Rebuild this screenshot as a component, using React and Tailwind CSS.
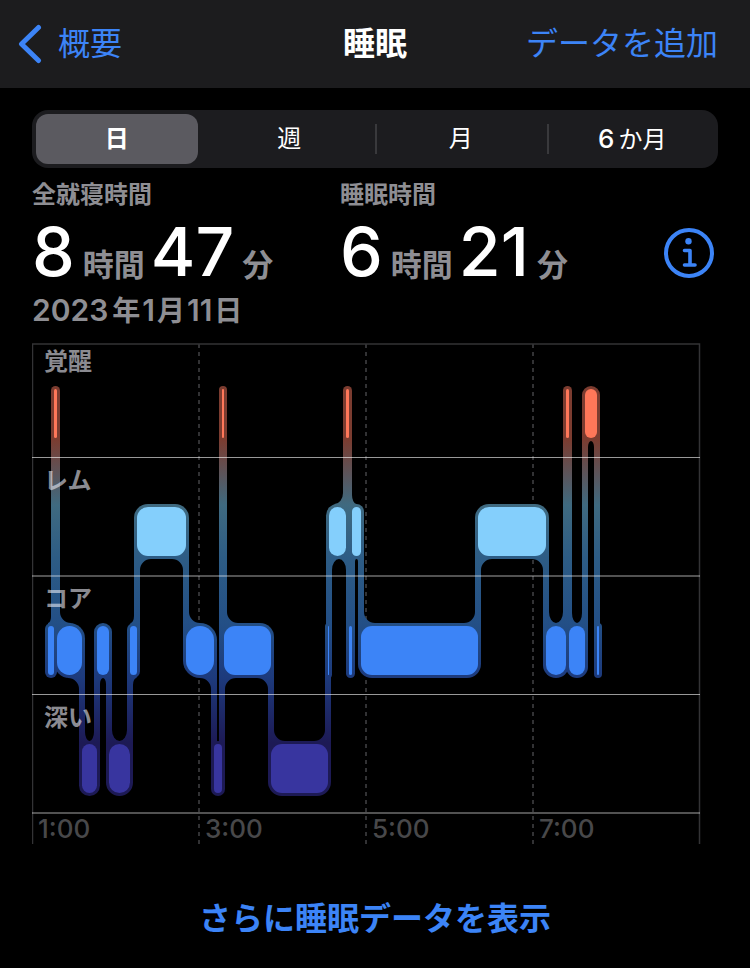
const stages = [
  { key: "awake", label: "覚醒", fill: "#ff7759" },
  { key: "rem", label: "レム", fill: "#84cffc" },
  { key: "core", label: "コア", fill: "#3c84f7" },
  { key: "deep", label: "深い", fill: "#38359f" },
];

// [stage index, x where the segment ends]
const night = [
  [2, 22], [0, 25], [2, 50], [3, 65], [2, 77], [3, 98], [2, 105], [1, 154],
  [2, 182], [3, 190], [0, 192], [2, 239], [3, 296], [2, 297], [1, 314],
  [0, 317], [2, 320], [1, 329], [2, 446], [1, 514], [2, 534], [0, 537],
  [2, 553], [0, 565], [2, 567],
];

const START = 16;
const EDGE = 3;
const BAR = 49;
const TOPS = [46, 164, 283, 401];

const segments = night.map(([stage, end], i) => ({
  stage,
  x: i === 0 ? START : night[i - 1][1],
  w: end - (i === 0 ? START : night[i - 1][1]),
  y: TOPS[stage],
}));

const radius = (w) => (w < 30 ? w / 2 : 11);

// curved corner where a connector leaves the halo of a bar
function fillet(cx, edge, side, dir, r) {
  const ry = Math.min(11, r * 2);
  const sweep = side * dir > 0 ? 1 : 0;
  return `M${cx} ${edge - dir * 16}V${edge + dir * ry}A${r} ${ry} 0 0 ${sweep} ${cx + side * r} ${edge}V${edge - dir * 16}Z`;
}

function filletsFor(i) {
  const seg = segments[i];
  const dirOf = (n) => (segments[n] ? Math.sign(segments[n].stage - seg.stage) : 0);
  const left = {};
  const right = {};
  const prev = segments[i - 1];
  const next = segments[i + 1];

  if (prev) {
    left[dirOf(i - 1)] = seg.x + EDGE;
    // a very short neighbour lets its far connector pass right beside this bar
    if (prev.w <= 3 && dirOf(i - 2) === -dirOf(i - 1)) left[dirOf(i - 2)] = prev.x + EDGE;
  }
  if (next) {
    right[dirOf(i + 1)] = seg.x + seg.w - EDGE;
    if (next.w <= 3 && dirOf(i + 2) === -dirOf(i + 1)) right[dirOf(i + 2)] = next.x + next.w - EDGE;
  }

  const paths = [];
  for (const dir of [-1, 1]) {
    const l = left[dir];
    const r = right[dir];
    const room = l !== undefined && r !== undefined ? (r - l) / 2 : seg.w / 2;
    const size = Math.min(11, room);
    if (size <= 1) continue;
    const edge = dir > 0 ? seg.y + BAR + EDGE : seg.y - EDGE;
    if (l !== undefined) paths.push(fillet(l, edge, 1, dir, size));
    if (r !== undefined) paths.push(fillet(r, edge, -1, dir, size));
  }
  return paths;
}

function SleepChart() {
  return (
    <svg viewBox="0 0 669 502" className="block w-full" role="img" aria-label="睡眠">
      <defs>
        <linearGradient id="halo" gradientUnits="userSpaceOnUse" x1="0" y1="43" x2="0" y2="453">
          <stop offset="0" stopColor="#7b3c30" />
          <stop offset="0.13" stopColor="#7b3c30" />
          <stop offset="0.29" stopColor="#3f6a80" />
          <stop offset="0.42" stopColor="#2d5c85" />
          <stop offset="0.58" stopColor="#234f86" />
          <stop offset="0.71" stopColor="#1d3a7c" />
          <stop offset="0.87" stopColor="#1d1a55" />
          <stop offset="1" stopColor="#1d1a55" />
        </linearGradient>
      </defs>

      <g stroke="#323234" strokeWidth="2">
        {[167, 334, 501].map((x) => (
          <line key={x} x1={x} x2={x} y1="1" y2="501" strokeDasharray="4 4" />
        ))}
      </g>
      <path d="M0.5 501V1H667.5V501" fill="none" stroke="#333335" strokeWidth="1.5" />

      <g fill="url(#halo)">
        {segments.map((s, i) => (
          <g key={s.x}>
            <rect x={s.x - EDGE} y={s.y - EDGE} width={s.w + EDGE * 2} height={BAR + EDGE * 2} rx={radius(s.w) + EDGE} />
            {filletsFor(i).map((d) => <path key={d} d={d} />)}
          </g>
        ))}
        {segments.slice(1).map((s, i) => {
          const top = Math.min(s.y, segments[i].y) + BAR / 2;
          const bottom = Math.max(s.y, segments[i].y) + BAR / 2;
          return <rect key={s.x} x={s.x - EDGE} y={top} width={EDGE * 2} height={bottom - top} />;
        })}
      </g>
      {segments.map((s) => (
        <rect key={s.x} x={s.x} y={s.y} width={s.w} height={BAR} rx={radius(s.w)} fill={stages[s.stage].fill} />
      ))}

      <g stroke="#ffffff">
        <line x1="0" x2="668" y1="114.5" y2="114.5" strokeOpacity="0.6" />
        <line x1="0" x2="668" y1="233" y2="233" strokeOpacity="0.32" strokeWidth="2" />
        <line x1="0" x2="668" y1="351.5" y2="351.5" strokeOpacity="0.6" />
        <line x1="0" x2="668" y1="470" y2="470" strokeOpacity="0.32" strokeWidth="2" />
      </g>

      <g className="text-[24px] font-semibold" fill="#ebebf5" fillOpacity="0.6">
        {stages.map((s, i) => (
          <text key={s.key} x="12" y={[27, 146, 264, 383][i]}>{s.label}</text>
        ))}
      </g>
      <g className="text-[26px] font-medium" fill="#48484a">
        {["1:00", "3:00", "5:00", "7:00"].map((t, i) => (
          <text key={t} x={6 + i * 167} y="495">{t}</text>
        ))}
      </g>
    </svg>
  );
}

function Duration({ label, hours, minutes }) {
  return (
    <div>
      <div className="text-2xl leading-8 font-semibold text-[#8e8e93]">{label}</div>
      <div className="flex items-baseline text-[31px] leading-10 font-semibold text-[#8e8e93]">
        <span className="text-[68px] leading-20 font-medium text-white">{hours}</span>
        <span className="ml-2">時間</span>
        <span className="ml-1.5 text-[68px] leading-20 font-medium text-white">{minutes}</span>
        <span className="ml-2">分</span>
      </div>
    </div>
  );
}

const ranges = [
  { key: "day", label: "日" },
  { key: "week", label: "週" },
  { key: "month", label: "月" },
  { key: "half", count: "6", label: "か月" },
];

export default function App() {
  return (
    <div className="min-h-screen bg-black text-white font-['Inter','Noto_Sans_CJK_JP',sans-serif]">
      <header className="grid grid-cols-[1fr_auto_1fr] items-center h-22 px-4 bg-[#1c1c1e] text-[32px] text-[#3c84f7] whitespace-nowrap">
        <a href="#summary" className="flex items-center gap-4">
          <svg viewBox="0 0 26 40" className="w-[26px] h-10" fill="none" stroke="currentColor" strokeWidth="5" strokeLinecap="round" strokeLinejoin="round">
            <path d="M22.5 3.5L5.5 20L22.5 36.5" />
          </svg>
          概要
        </a>
        <h1 className="text-center font-bold text-white">睡眠</h1>
        <button type="button" className="justify-self-end mr-4">データを追加</button>
      </header>

      <main className="px-8 pt-[22px]">
        <div className="grid grid-cols-4 h-[58px] rounded-2xl bg-[#1c1c1f] text-2xl">
          {ranges.map((r, i) => (
            <button
              key={r.key}
              type="button"
              aria-pressed={i === 0}
              className={
                i === 0
                  ? "m-1 mr-1.5 rounded-xl bg-[#5b5a60] font-bold"
                  : "relative " + (i > 1 ? "before:absolute before:left-0 before:inset-y-3.5 before:w-0.5 before:bg-[#39393c]" : "")
              }
            >
              {r.count && <span className="mr-1 text-[26px] font-medium">{r.count}</span>}
              {r.label}
            </button>
          ))}
        </div>

        <section className="grid grid-cols-[308px_1fr_auto] pt-[11px]">
          <Duration label="全就寝時間" hours="8" minutes="47" />
          <Duration label="睡眠時間" hours="6" minutes="21" />
          <button type="button" aria-label="情報" className="self-end mb-[13px] mr-1 text-[#3c84f7]">
            <svg viewBox="0 0 50 50" className="block size-[50px]" fill="none" stroke="currentColor">
              <circle cx="25" cy="25" r="23" strokeWidth="4" />
              <circle cx="24.5" cy="13.2" r="3.2" fill="currentColor" stroke="none" />
              <path d="M20.5 22.5H26V37M20.5 37H31" strokeWidth="3.6" strokeLinecap="round" strokeLinejoin="round" />
            </svg>
          </button>
        </section>
        <p className="text-[28px] leading-[38px] font-semibold text-[#8e8e93]">
          <span className="mr-1 text-[30px]">2023</span>年
          <span className="mx-0.5 text-[30px]">1</span>月
          <span className="mx-0.5 text-[30px]">11</span>日
        </p>

        <div className="mt-[13px] mr-[17px]">
          <SleepChart />
        </div>

        <a href="#more" className="block mt-[50px] text-center text-[32px] leading-12 font-bold text-[#3c84f7]">
          さらに睡眠データを表示
        </a>
      </main>
    </div>
  );
}
